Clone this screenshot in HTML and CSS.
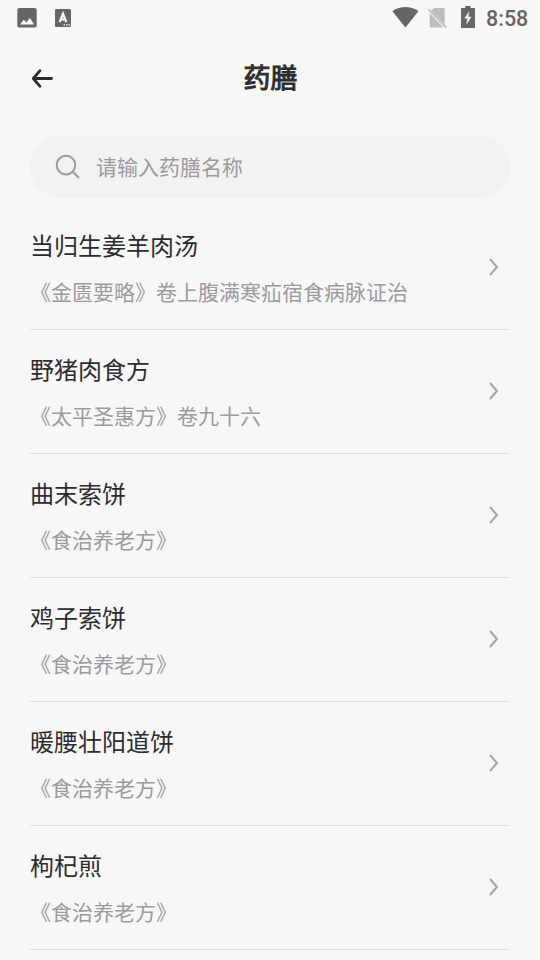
FILE: index.html
```html
<!DOCTYPE html>
<html lang="zh-CN">
<head>
<meta charset="utf-8">
<title>药膳</title>
<link rel="stylesheet" href="styles.css">
</head>
<body>
<div class="statusbar">
  <svg class="status-left" width="80" height="36" viewBox="0 0 80 36">
    <rect x="17.3" y="8" width="19.4" height="19.6" rx="2" fill="#666"/>
    <path d="M20 24.5l3.8-4.8 2.5 2.8 3.6-4.6 4.3 6.6z" fill="#f7f7f7"/>
    <rect x="55" y="9" width="16" height="18" rx="1.2" fill="#666"/>
    <path d="M59.6 22.2L63 13.8l3.4 8.4M60.9 19.6h4.2" fill="none" stroke="#f7f7f7" stroke-width="2.2"/>
    <path d="M63.5 24.9h1.5m1 0h1.5m1 0H70" stroke="#f7f7f7" stroke-width="1.2"/>
  </svg>
  <svg class="status-right" width="100" height="36" viewBox="384 0 100 36">
    <path d="M405.400 27.600L392.400 11.200Q398.400 7 405.400 7T418.400 11.200Z" fill="#666"/>
    <path d="M434.300 8H443.300Q444.700 8 444.700 9.400V24.300L431 10.700ZM429.700 13.300L443.500 27.500H431.100Q429.700 27.500 429.700 26.100Z" fill="#bdbdbd"/>
    <path d="M428.300 9.300L446.400 27.600" stroke="#bdbdbd" stroke-width="1.700"/>
    <path d="M461 8h4.200V6h5.300v2H475v20h-14z" fill="#666"/>
    <path d="M469.300 11.300L464.300 18.600h3.100l-1.200 6.300 5.200-8.200h-3.100z" fill="#f7f7f7"/>
  </svg>
  <span class="clock">8:58</span>
</div>
<header class="header">
  <svg class="back" width="24" height="24" viewBox="30 66 24 24"><path d="M51.500 78.500H33.500M40 70.700L33.300 78.500L40 86.300" fill="none" stroke="#2b2a33" stroke-width="2.800" stroke-linecap="round" stroke-linejoin="round"/></svg>
  <h1 class="title">药膳</h1>
</header>
<div class="search">
  <svg width="26" height="26" viewBox="55 154 26 26"><path d="M73.600 172.500L78.300 177.300" stroke="#9b9aa1" stroke-width="2.200" stroke-linecap="round"/><circle cx="66" cy="165.100" r="9.300" fill="none" stroke="#9b9aa1" stroke-width="2"/></svg>
  <span class="placeholder">请输入药膳名称</span>
</div>
<main class="list">
  <div class="item"><div><div class="name">当归生姜羊肉汤</div><div class="source">《金匮要略》卷上腹满寒疝宿食病脉证治</div></div><svg class="chevron" width="12" height="20" viewBox="0 0 12 20"><path d="M2 2L9 10L2 18"/></svg></div>
  <div class="item"><div><div class="name">野猪肉食方</div><div class="source">《太平圣惠方》卷九十六</div></div><svg class="chevron" width="12" height="20" viewBox="0 0 12 20"><path d="M2 2L9 10L2 18"/></svg></div>
  <div class="item"><div><div class="name">曲末索饼</div><div class="source">《食治养老方》</div></div><svg class="chevron" width="12" height="20" viewBox="0 0 12 20"><path d="M2 2L9 10L2 18"/></svg></div>
  <div class="item"><div><div class="name">鸡子索饼</div><div class="source">《食治养老方》</div></div><svg class="chevron" width="12" height="20" viewBox="0 0 12 20"><path d="M2 2L9 10L2 18"/></svg></div>
  <div class="item"><div><div class="name">暖腰壮阳道饼</div><div class="source">《食治养老方》</div></div><svg class="chevron" width="12" height="20" viewBox="0 0 12 20"><path d="M2 2L9 10L2 18"/></svg></div>
  <div class="item"><div><div class="name">枸杞煎</div><div class="source">《食治养老方》</div></div><svg class="chevron" width="12" height="20" viewBox="0 0 12 20"><path d="M2 2L9 10L2 18"/></svg></div>
</main>
</body>
</html>
```
FILE: styles.css
```css
* { box-sizing: border-box; }
body {
  margin: 0;
  height: 960px;
  overflow: hidden;
  background: #f7f7f7;
  color: #2d2c31;
  font-family: "Noto Sans CJK SC", sans-serif;
}
svg { display: block; flex: none; }
.statusbar { display: flex; height: 36px; }
.status-right { margin-left: auto; }
.clock {
  width: 56px;
  padding-left: 2px;
  font: 500 21.500px/38px Roboto, sans-serif;
  color: #666;
}
.header {
  display: grid;
  grid-template-columns: 24px 1fr 24px;
  align-items: center;
  height: 84px;
  padding: 0 30px;
}
.title {
  margin: 0;
  padding: 0 0 2px 1px;
  text-align: center;
  font-size: 27px;
  line-height: 40px;
  font-weight: 400;
  -webkit-text-stroke: 1px #2d2c31;
}
.search {
  display: flex;
  align-items: center;
  gap: 15px;
  height: 63px;
  margin: 15px 30px 8px;
  padding-left: 25px;
  border-radius: 32px;
  background: #f2f2f2;
}
.placeholder { padding-bottom: 2px; font-size: 21px; line-height: 30px; color: #9b9aa1; }
.list { padding: 0 30px; }
.item {
  display: flex;
  align-items: center;
  justify-content: space-between;
  height: 124px;
  padding-right: 10px;
  border-bottom: 1px solid #dfdfdf;
}
.name { font-size: 24px; line-height: 36px; margin-bottom: 12px; }
.source { padding-bottom: 2px; font-size: 21px; line-height: 32px; color: #9b9aa1; }
.chevron { margin-bottom: 1px; }
.chevron path { fill: none; stroke: #a5a5a5; stroke-width: 2; }
```
